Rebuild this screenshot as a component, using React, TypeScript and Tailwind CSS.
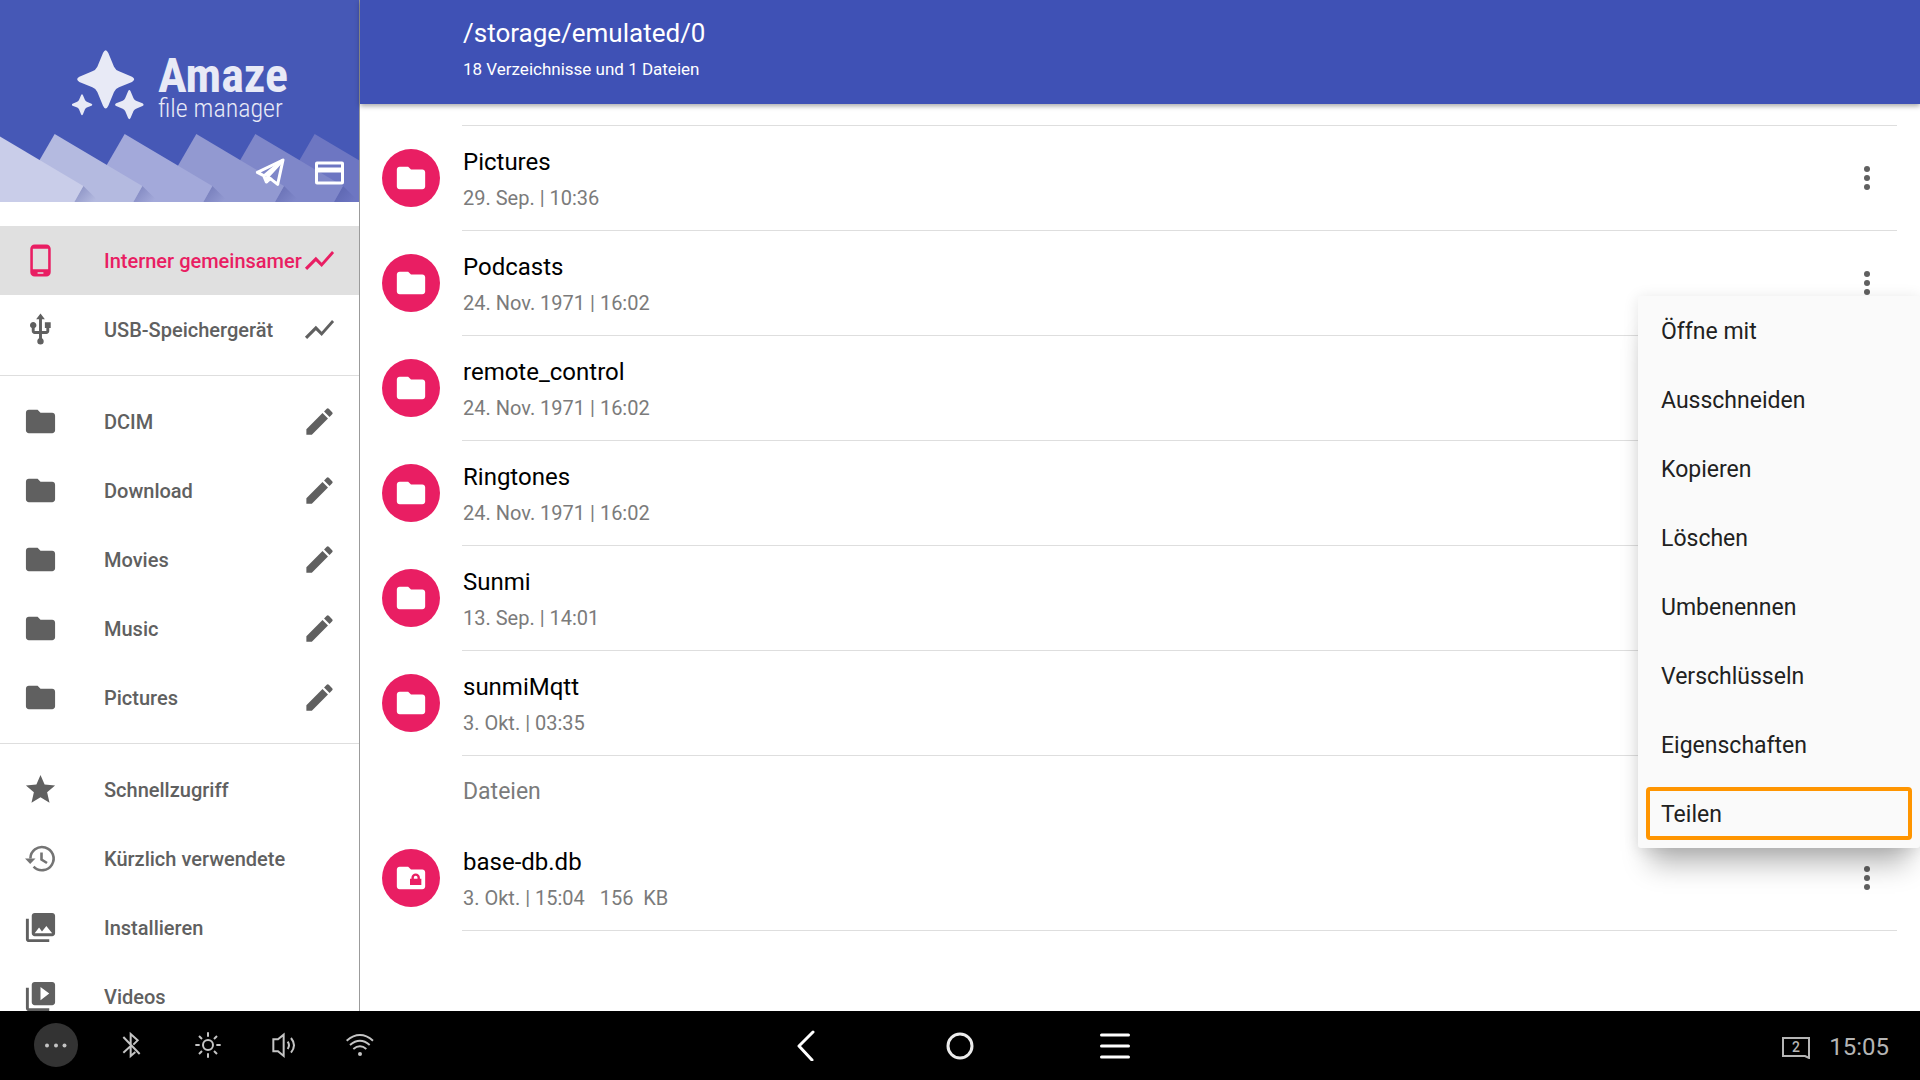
import type { ReactNode } from 'react';
import type { IconType } from 'react-icons';
import { MdEdit, MdFolder, MdPhoneAndroid, MdPhotoLibrary, MdShowChart, MdStar, MdUsb, MdVideoLibrary } from 'react-icons/md';

interface DrawerEntry {
  label: string;
  icon: IconType | typeof HistoryIcon;
  action?: IconType;
  selected?: boolean;
}

interface FileEntry {
  name: string;
  info: string;
  locked?: boolean;
}

const DRAWER_GROUPS: DrawerEntry[][] = [
  [
    { label: 'Interner gemeinsamer', icon: MdPhoneAndroid, action: MdShowChart, selected: true },
    { label: 'USB-Speichergerät', icon: MdUsb, action: MdShowChart },
  ],
  [
    { label: 'DCIM', icon: MdFolder, action: MdEdit },
    { label: 'Download', icon: MdFolder, action: MdEdit },
    { label: 'Movies', icon: MdFolder, action: MdEdit },
    { label: 'Music', icon: MdFolder, action: MdEdit },
    { label: 'Pictures', icon: MdFolder, action: MdEdit },
  ],
  [
    { label: 'Schnellzugriff', icon: MdStar },
    { label: 'Kürzlich verwendete', icon: HistoryIcon },
    { label: 'Installieren', icon: MdPhotoLibrary },
    { label: 'Videos', icon: MdVideoLibrary },
  ],
];

const FOLDERS: FileEntry[] = [
  { name: 'Pictures', info: '29. Sep. | 10:36' },
  { name: 'Podcasts', info: '24. Nov. 1971 | 16:02' },
  { name: 'remote_control', info: '24. Nov. 1971 | 16:02' },
  { name: 'Ringtones', info: '24. Nov. 1971 | 16:02' },
  { name: 'Sunmi', info: '13. Sep. | 14:01' },
  { name: 'sunmiMqtt', info: '3. Okt. | 03:35' },
];

const FILES: FileEntry[] = [{ name: 'base-db.db', info: '3. Okt. | 15:04   156  KB', locked: true }];

const MENU_ITEMS = ['Öffne mit', 'Ausschneiden', 'Kopieren', 'Löschen', 'Umbenennen', 'Verschlüsseln', 'Eigenschaften', 'Teilen'];

export default function App() {
  return (
    <div className="flex h-screen flex-col overflow-hidden bg-white font-['Roboto',sans-serif]">
      <div className="flex min-h-0 flex-1">
        <Drawer />
        <FileBrowser />
      </div>
      <SystemBar />
    </div>
  );
}

function Drawer() {
  return (
    <aside className="flex w-[360px] shrink-0 flex-col overflow-hidden border-r border-[#9b9b9b]">
      <DrawerHeader />
      <nav className="mt-6 flex flex-col">
        {DRAWER_GROUPS.map((group, i) => (
          <ul key={i} className={i > 0 ? 'mt-[11px] border-t border-[#dedede] pt-[11px]' : ''}>
            {group.map(entry => <DrawerRow key={entry.label} entry={entry} />)}
          </ul>
        ))}
      </nav>
    </aside>
  );
}

function DrawerRow({ entry }: { entry: DrawerEntry }) {
  const { label, icon: Icon, action: Action, selected } = entry;
  return (
    <li className={`flex h-[69px] items-center pr-[22px] pl-[23px] ${selected ? 'bg-[#e0e0e0] text-[#e91e63]' : 'text-[#606060]'}`}>
      <button className="flex min-w-0 flex-1 items-center gap-[46px] text-left text-[20px] font-medium whitespace-nowrap">
        <Icon className="size-[35px] shrink-0" />
        {label}
      </button>
      {Action && (
        <button className="shrink-0" aria-label={`${label} Optionen`}>
          <Action className="size-[35px]" />
        </button>
      )}
    </li>
  );
}

const STAR = 'M-8-79Q0-96 8-79L25-38Q30-28 40-24L79-8Q92 0 79 8L40 24Q30 28 25 38L8 79Q0 96-8 79L-25 38Q-30 28-40 24L-79 8Q-92 0-79-8L-40-24Q-30-28-25-38Z';

// paper sheets along the bottom edge, back to front
const SHEETS = [
  { x: 944, y: 402, fill: '#6d76c2' },
  { x: 766, y: 402, fill: '#7f87c9' },
  { x: 589, y: 402, fill: '#9299d1' },
  { x: 374, y: 402, fill: '#a3a9da' },
  { x: 164, y: 402, fill: '#b4bae0' },
  { x: -13, y: 402, fill: '#c9cde9' },
];

function DrawerHeader() {
  return (
    <header className="relative h-[202px] shrink-0 overflow-hidden bg-[#4658b6] text-[#e8eaf6]">
      <svg className="absolute inset-0 size-full" viewBox="0 0 1077 606" preserveAspectRatio="xMinYMax slice" aria-hidden="true">
        <defs>
          <linearGradient id="fold" x1="0" y1="0" x2="1" y2="0.6">
            <stop offset="0" stopColor="#3f478f" stopOpacity="0.4" />
            <stop offset="1" stopColor="#3f478f" stopOpacity="0" />
          </linearGradient>
        </defs>
        {SHEETS.map(s => (
          <g key={s.x} transform={`translate(${s.x} ${s.y})`}>
            <path d="M263 156L312 204H236Z" fill="url(#fold)" />
            <path d="M0 0L263 156L236 204H-118Z" fill={s.fill} />
          </g>
        ))}
      </svg>
      <div className="relative flex gap-[14px] pt-[50px] pl-[72px]">
        <svg className="h-[70px] w-[72px]" viewBox="216 149 216 210" fill="currentColor" aria-hidden="true">
          <path d={STAR} transform="translate(317 237)" />
          <path d={STAR} transform="translate(388 313) scale(0.5)" />
          <path d={STAR} transform="translate(246 313) scale(0.36)" />
        </svg>
        <div className="font-['Roboto_Condensed','Roboto',sans-serif]">
          <div className="text-[48px] leading-[52px] font-bold">Amaze</div>
          <div className="text-[26px] leading-[12px] font-light">file manager</div>
        </div>
      </div>
      <div className="absolute right-[15px] bottom-[15px] flex items-center gap-[30px] text-white">
        <button aria-label="Telegram">
          <svg className="h-[29px] w-[30px]" viewBox="0 0 90 87" fill="none" stroke="currentColor" strokeWidth="9" strokeLinejoin="round">
            <path d="M84 6L7 43L26 53L34 72L46 62L68 79Z" />
            <path d="M84 6L28 53M84 6L38 56L34 74M38 56L50 65" />
          </svg>
        </button>
        <button aria-label="Spenden">
          <svg className="h-[24px] w-[29px]" viewBox="0 0 29 24" fill="none" stroke="currentColor" strokeWidth="3">
            <rect x="1.5" y="2" width="26" height="20" rx="0.5" />
            <path d="M2 9h25" strokeWidth="5" />
          </svg>
        </button>
      </div>
    </header>
  );
}

function FileBrowser() {
  return (
    <main className="relative flex min-w-0 flex-1 flex-col">
      <header className="relative z-10 h-[104px] shrink-0 bg-[#3f51b5] pt-[15px] pl-[103px] text-white shadow-[0_2px_5px_rgba(0,0,0,0.35)]">
        <h1 className="text-[26px] leading-[36px]">/storage/emulated/0</h1>
        <p className="text-[17px] leading-[36px]">18 Verzeichnisse und 1 Dateien</p>
      </header>
      <div className="min-h-0 flex-1 overflow-hidden pr-[23px] pl-[22px]">
        <div className="ml-[80px] h-[22px] border-b border-[#dedede]" />
        <ul>{FOLDERS.map(f => <FileRow key={f.name} file={f} />)}</ul>
        <h2 className="h-[70px] pt-px pl-[81px] text-[23px] leading-[70px] text-[#7b7b7b]">Dateien</h2>
        <ul>{FILES.map(f => <FileRow key={f.name} file={f} />)}</ul>
      </div>
      <ContextMenu />
    </main>
  );
}

function FileRow({ file }: { file: FileEntry }) {
  return (
    <li className="flex h-[105px]">
      <div className="flex w-[80px] shrink-0 items-center pb-[2px]">
        <span className="flex size-[58px] items-center justify-center rounded-full bg-[#e91e63] text-white">
          {file.locked ? <LockedFolderIcon /> : <MdFolder className="size-[34px]" />}
        </span>
      </div>
      <div className="flex flex-1 border-b border-[#dedede] pl-px">
        <button className="flex flex-1 flex-col pt-[18px] text-left whitespace-pre">
          <span className="text-[24px] leading-[36px] text-black">{file.name}</span>
          <span className="text-[20px] leading-[36px] text-[#7b7b7b]">{file.info}</span>
        </button>
        <button className="w-[60px] text-[#606060]" aria-label={`Menü für ${file.name}`}>
          <svg className="mx-auto h-[24px] w-[6px]" viewBox="0 0 6 24" fill="currentColor">
            <circle cx="3" cy="3" r="3" />
            <circle cx="3" cy="12" r="3" />
            <circle cx="3" cy="21" r="3" />
          </svg>
        </button>
      </div>
    </li>
  );
}

function ContextMenu() {
  return (
    <ul role="menu" className="absolute top-[296px] right-0 w-[282px] rounded-[3px] bg-[#fafafa] shadow-[0_28px_26px_-12px_rgba(0,0,0,0.28),0_2px_16px_rgba(0,0,0,0.11)]">
      {MENU_ITEMS.map(item => (
        <li key={item} role="none" className="h-[69px] p-2">
          <button
            role="menuitem"
            className={`h-full w-full rounded-[4px] border-4 pt-1 pl-[11px] text-left text-[23px] text-[#212121] ${item === 'Teilen' ? 'border-[#ff9500]' : 'border-transparent'}`}
          >
            {item}
          </button>
        </li>
      ))}
    </ul>
  );
}

function SystemBar() {
  return (
    <footer className="grid h-[69px] shrink-0 grid-cols-[1fr_auto_1fr] items-center bg-black text-[#c4c4c4]">
      <div className="flex items-center pl-[18px]">
        <BarButton label="Mehr">
          <svg className="size-[44px]" viewBox="0 0 44 44" fill="currentColor">
            <circle cx="22" cy="22" r="22" fill="#333" />
            <circle cx="13" cy="22.5" r="2" />
            <circle cx="22" cy="22.5" r="2" />
            <circle cx="30.5" cy="22.5" r="2" />
          </svg>
        </BarButton>
        <BarButton label="Bluetooth">
          <svg className="size-[28px]" viewBox="0 0 84 84" fill="none" stroke="currentColor" strokeWidth="6">
            <path d="M16 18L65 69M38 40V9L59 28L46 41M16 65L38 45V75L52 63" />
          </svg>
        </BarButton>
        <BarButton label="Helligkeit">
          <svg className="size-[28px]" viewBox="0 0 84 84" fill="none" stroke="currentColor" strokeWidth="6">
            <circle cx="42" cy="42" r="15" />
            <path d="M42 4V17M42 67V80M4 42H17M67 42H80M15 15L24 24M60 60L69 69M15 69L24 60M60 24L69 15" />
          </svg>
        </BarButton>
        <BarButton label="Lautstärke">
          <svg className="size-[28px]" viewBox="0 0 84 84" fill="none" stroke="currentColor" strokeWidth="6">
            <path d="M10 25H24L41 11V75L24 61H10Z" />
            <path d="M53 32Q61 43 53 54M63 21Q81 43 63 65" />
          </svg>
        </BarButton>
        <BarButton label="WLAN">
          <svg className="size-[28px]" viewBox="0 0 84 84" fill="none" stroke="currentColor" strokeWidth="6">
            <path d="M2 29Q42-5 81 29M12 42Q42 17 71 42M22 54Q42 38 61 54" />
            <circle cx="42" cy="69" r="6" fill="currentColor" stroke="none" />
          </svg>
        </BarButton>
      </div>
      <div className="flex items-center gap-[79px] text-white">
        <BarButton label="Zurück">
          <svg className="size-[32px]" viewBox="0 0 32 32" fill="none" stroke="currentColor" strokeWidth="3" strokeLinecap="round" strokeLinejoin="round">
            <path d="M24 3L10 17L23 31" />
          </svg>
        </BarButton>
        <BarButton label="Startseite">
          <svg className="size-[32px]" viewBox="0 0 32 32" fill="none" stroke="#ececec" strokeWidth="3">
            <circle cx="16" cy="17" r="12" />
          </svg>
        </BarButton>
        <BarButton label="Übersicht">
          <svg className="size-[32px]" viewBox="0 0 32 32" fill="none" stroke="currentColor" strokeWidth="3" strokeLinecap="round">
            <path d="M2.5 6H29.5M2.5 17H29.5M2.5 28H29.5" />
          </svg>
        </BarButton>
      </div>
      <div className="flex items-center justify-end gap-[19px] pt-[2px] pr-[31px] text-[#b5b5b5]">
        <svg className="mt-[3px] h-[22px] w-[29px]" viewBox="0 0 29 22" fill="none" stroke="currentColor" strokeWidth="2">
          <path d="M2 1H28V21L24 19H2Z" />
          <text x="15" y="15" textAnchor="middle" fontSize="14" fontWeight="500" fill="currentColor" stroke="none">2</text>
        </svg>
        <time className="text-[24px]">15:05</time>
      </div>
    </footer>
  );
}

function BarButton({ label, children }: { label: string; children: ReactNode }) {
  return <button aria-label={label} className="flex h-[69px] w-[76px] items-center justify-center pb-[2px]">{children}</button>;
}

function HistoryIcon({ className }: { className?: string }) {
  return (
    <svg className={className} viewBox="0 0 35 35" fill="none" stroke="#747474" strokeWidth="2.6">
      <path d="M7.4 17.5A11.6 11.6 0 1 1 10.6 25.6M18.5 11.5V18.5L24 22" />
      <path d="M2 17.5H12.5L7.2 23Z" fill="#747474" stroke="none" />
    </svg>
  );
}

function LockedFolderIcon() {
  return (
    <svg className="size-[34px]" viewBox="0 0 24 24" fill="currentColor">
      <path d="M20 6h-8l-2-2H4c-1.1 0-2 .9-2 2v12c0 1.1.9 2 2 2h16c1.1 0 2-.9 2-2V8c0-1.1-.9-2-2-2z" />
      <path fill="#e91e63" fillRule="evenodd" d="M11.3 12.500h1v-.7a3 3 0 0 1 6 0v.7h1v4.500h-8zM14 12.500h2.600v-.8a1.300 1.300 0 0 0-2.600 0z" />
    </svg>
  );
}
